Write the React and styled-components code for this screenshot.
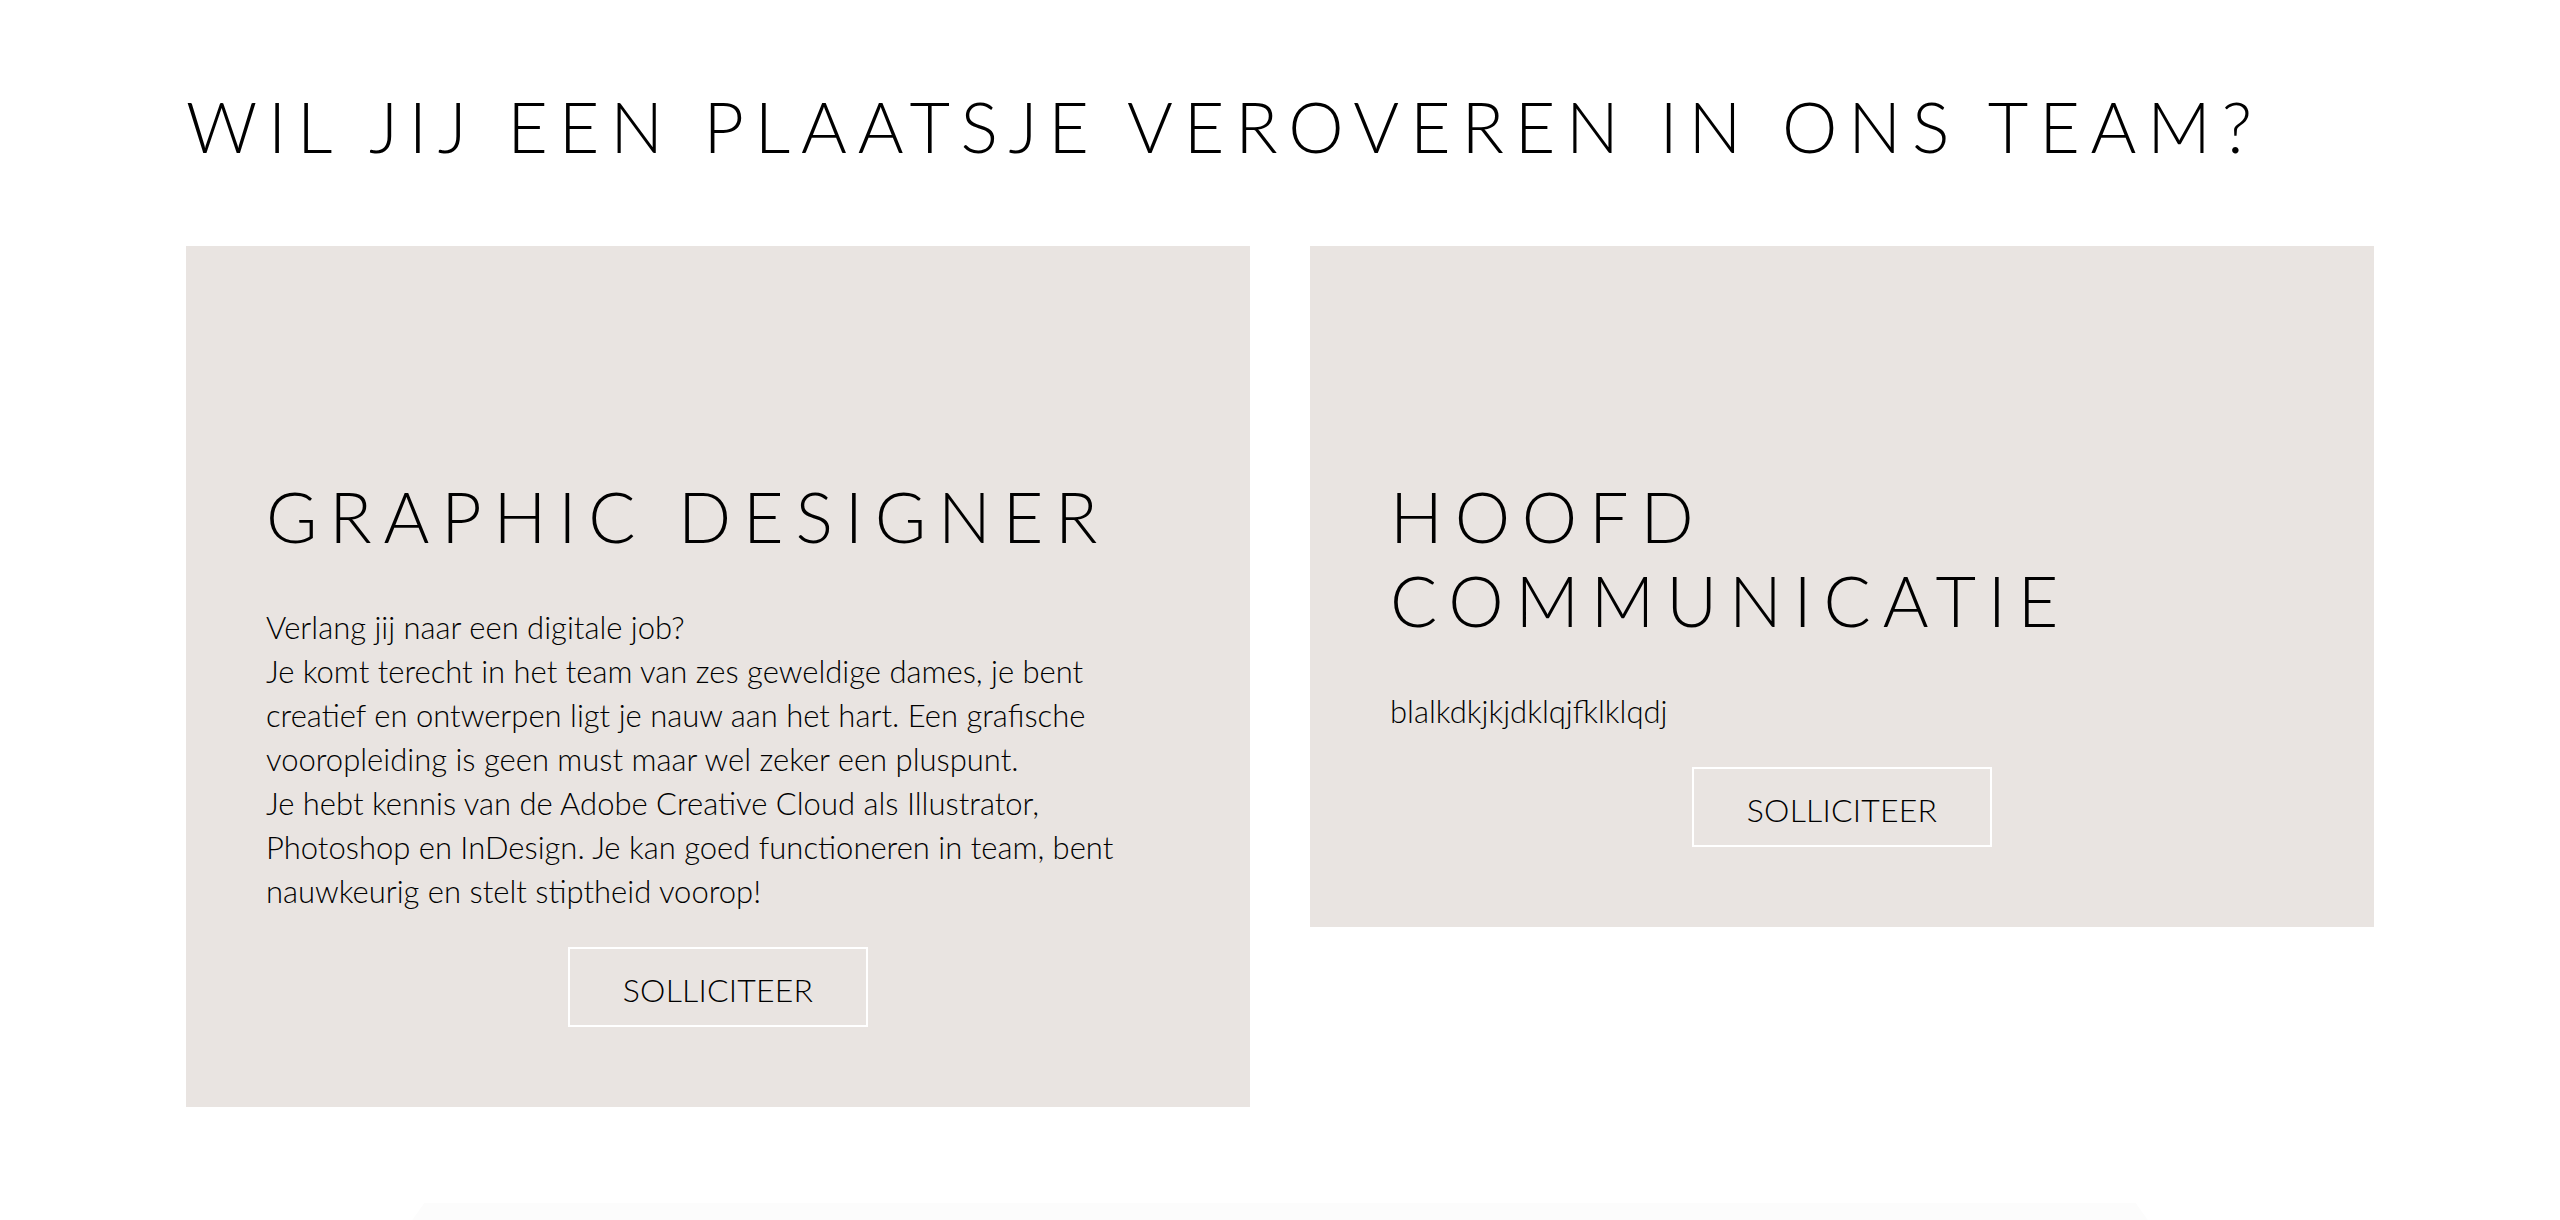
import React from "react";
import styled, { createGlobalStyle } from "styled-components";

const GlobalStyle = createGlobalStyle`
  html, body {
    margin: 0;
    padding: 0;
    background: #ffffff;
  }
  body {
    font-family: Lato, "Open Sans", "Liberation Sans", sans-serif;
    color: #000;
  }
`;

const Page = styled.main`
  width: 2188px;
  margin: 0 auto;
  padding-top: 84px;
`;

const PageTitle = styled.h1`
  margin: 0 0 78px 0;
  font-family: Lato, "Liberation Sans", sans-serif;
  font-weight: 300;
  font-size: 70px;
  line-height: 84px;
  letter-spacing: 10.8px;
  text-transform: uppercase;
  color: #000;
  white-space: nowrap;
`;

const Grid = styled.div`
  display: grid;
  grid-template-columns: 1064px 1064px;
  column-gap: 60px;
  align-items: start;
`;

const Card = styled.article`
  background: #e9e4e1;
  padding: 228px 80px 80px 80px;
  display: flex;
  flex-direction: column;
`;

const CardTitle = styled.h2`
  margin: 0 0 47px 0;
  font-weight: 300;
  font-size: 70px;
  line-height: 84px;
  letter-spacing: 11.8px;
  text-transform: uppercase;
  color: #000;
`;

const Body = styled.p`
  margin: 0;
  max-width: 880px;
  font-weight: 300;
  font-size: 31px;
  line-height: 44px;
  color: #000;
`;

const Apply = styled.button`
  align-self: center;
  margin-top: 34px;
  background: transparent;
  border: 2px solid #ffffff;
  padding: 19px 53px 13px;
  font-family: Lato, "Liberation Sans", sans-serif;
  font-weight: 300;
  font-size: 32px;
  line-height: 44px;
  letter-spacing: 0.2px;
  color: #000;
  text-transform: uppercase;
  cursor: pointer;
`;

const Footer = styled.div`
  margin: 96px auto 0;
  width: 1768px;
  height: 40px;
  background: #fcfcfc;
  clip-path: polygon(1.6% 0, 98.4% 0, 100% 100%, 0 100%);
`;

const jobs = [
  {
    title: "Graphic designer",
    body: [
      "Verlang jij naar een digitale job?",
      "Je komt terecht in het team van zes geweldige dames, je bent creatief en ontwerpen ligt je nauw aan het hart. Een grafische vooropleiding is geen must maar wel zeker een pluspunt.",
      "Je hebt kennis van de Adobe Creative Cloud als Illustrator, Photoshop en InDesign. Je kan goed functioneren in team, bent nauwkeurig en stelt stiptheid voorop!",
    ],
  },
  {
    title: "Hoofd communicatie",
    body: ["blalkdkjkjdklqjfklklqdj"],
  },
];

export default function App() {
  return (
    <>
      <GlobalStyle />
      <Page>
        <PageTitle>Wil jij een plaatsje veroveren in ons team?</PageTitle>
        <Grid>
          {jobs.map((job) => (
            <Card key={job.title}>
              <CardTitle>{job.title}</CardTitle>
              <Body>
                {job.body.map((line, i) => (
                  <React.Fragment key={i}>
                    {i > 0 && <br />}
                    {line}
                  </React.Fragment>
                ))}
              </Body>
              <Apply type="button">Solliciteer</Apply>
            </Card>
          ))}
        </Grid>
        <Footer />
      </Page>
    </>
  );
}
